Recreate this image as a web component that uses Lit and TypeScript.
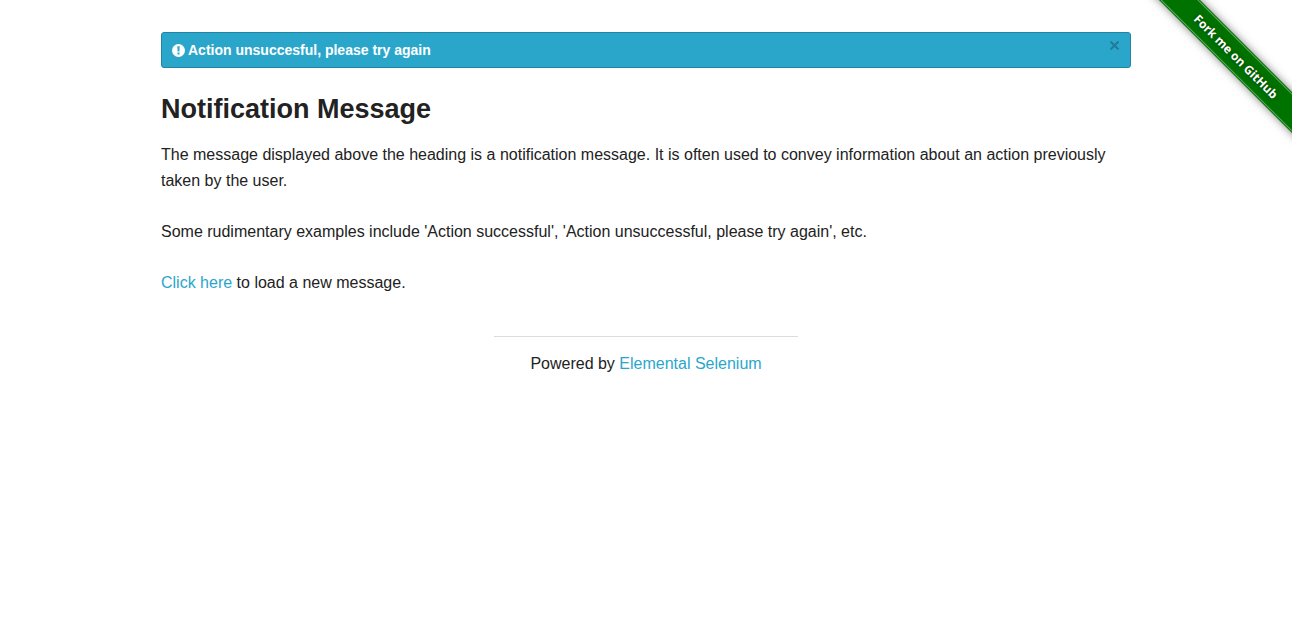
import { LitElement, html, css } from "lit";
import { customElement, state } from "lit/decorators.js";

@customElement("fork-ribbon")
class ForkRibbon extends LitElement {
  static styles = css`
    :host {
      position: absolute;
      top: 0;
      right: 0;
      width: 149px;
      height: 149px;
      overflow: hidden;
      pointer-events: none;
    }
    .band {
      position: absolute;
      top: 42px;
      left: -20px;
      width: 226px;
      height: 29px;
      box-sizing: border-box;
      padding: 1px 0;
      transform: rotate(45deg);
      background: #007200;
      box-shadow: 0 0 8px rgba(0, 0, 0, 0.5);
      color: #fff;
      font: 700 12px/25px "Open Sans", "Noto Sans", sans-serif;
      text-align: center;
      text-decoration: none;
      text-shadow: 0 0 4px rgba(0, 0, 0, 0.5);
      pointer-events: auto;
    }
    .stitch {
      display: block;
      border-top: 1px solid #68ac68;
      border-bottom: 1px solid #68ac68;
    }
  `;

  render() {
    return html`<a class="band" href="#"><span class="stitch">Fork me on GitHub</span></a>`;
  }
}

@customElement("app-root")
class AppRoot extends LitElement {
  @state() private open = true;

  static styles = css`
    :host {
      display: block;
      position: relative;
      color: #222;
      background: #fff;
      font: 16px/26px "Liberation Sans", Arial, sans-serif;
    }
    .page {
      box-sizing: border-box;
      max-width: 1000px;
      margin: 0 auto;
      padding: 32px 15px 0;
    }
    .alert {
      display: flex;
      align-items: center;
      gap: 3px;
      box-sizing: border-box;
      padding: 8px 10px;
      border: 1px solid #2284a1;
      border-radius: 3px;
      background: #2ba6cb;
      color: #fff;
      font-size: 14px;
      font-weight: 700;
      line-height: 18px;
    }
    .icon {
      width: 13px;
      height: 13px;
      flex: none;
    }
    .message {
      flex: 1;
    }
    .close {
      align-self: flex-start;
      display: flex;
      padding: 0;
      border: 0;
      background: none;
      color: #000;
      opacity: 0.25;
      cursor: pointer;
    }
    .cross {
      width: 11px;
      height: 9px;
    }
    h1 {
      margin: 22px 0 14px;
      font-size: 27px;
      line-height: 38px;
    }
    p {
      margin: 0 0 25px;
    }
    a {
      color: #2ba6cb;
      text-decoration: none;
    }
    footer {
      box-sizing: border-box;
      max-width: 304px;
      margin: 40px auto 0;
      padding-top: 14px;
      border-top: 1px solid #ddd;
      text-align: center;
    }
  `;

  render() {
    return html`
      <main class="page">
        ${this.open
          ? html`<div class="alert" role="alert">
              <svg class="icon" viewBox="0 0 13 13" aria-hidden="true">
                <circle cx="6.5" cy="6.5" r="6.5" fill="#fff" />
                <path d="M5.3 2.2h2.4l-.3 5.2H5.6zM5.5 8.6h2v2h-2z" fill="#2ba6cb" />
              </svg>
              <span class="message">Action unsuccesful, please try again</span>
              <button class="close" aria-label="Close" @click=${() => (this.open = false)}>
                <svg class="cross" viewBox="0 0 11 9" aria-hidden="true">
                  <path d="M1.5 .5l8 8M9.5 .5l-8 8" stroke="currentColor" stroke-width="2" />
                </svg>
              </button>
            </div>`
          : null}
        <h1>Notification Message</h1>
        <p>
          The message displayed above the heading is a notification message. It is often used to
          convey information about an action previously taken by the user.
        </p>
        <p>
          Some rudimentary examples include 'Action successful', 'Action unsuccessful, please try
          again', etc.
        </p>
        <p><a href="#">Click here</a> to load a new message.</p>
        <footer>Powered by <a href="#">Elemental Selenium</a></footer>
      </main>
      <fork-ribbon></fork-ribbon>
    `;
  }
}
